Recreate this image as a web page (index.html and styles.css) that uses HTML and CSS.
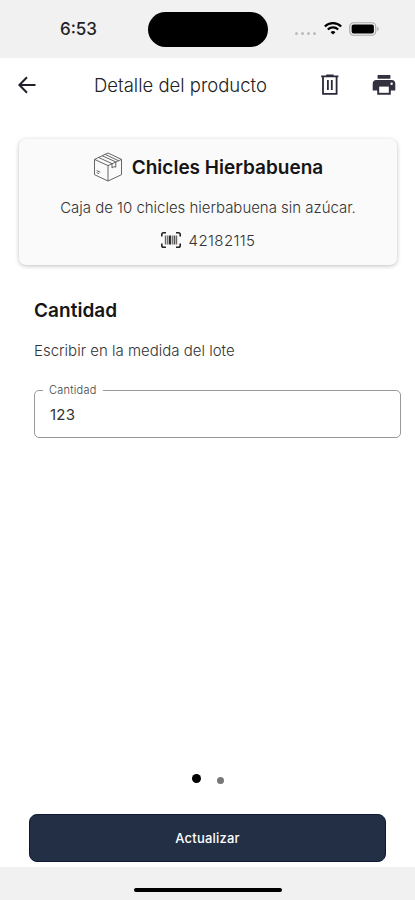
FILE: index.html
```html
<!DOCTYPE html>
<html lang="es">
<head>
<meta charset="utf-8">
<title>Detalle del producto</title>
<link rel="stylesheet" href="styles.css">
</head>
<body>
<div class="screen">
  <div class="status">
    <span class="time">6:53</span>
    <span class="island"></span>
    <span class="signal"><i></i><i></i><i></i><i></i></span>
    <svg class="wifi" width="18" height="13" viewBox="0 0 18 13" fill="none" stroke="#000" stroke-width="2.1"><path d="M.8 4.4a11.8 11.8 0 0 1 16.400 0M3.800 7.500a7.400 7.400 0 0 1 10.400 0"/><path d="M9 12.600 6.600 10.200a3.500 3.500 0 0 1 4.800 0z" fill="#000" stroke="none"/></svg>
    <svg class="battery" width="31" height="14" viewBox="0 0 31 14"><rect x=".75" y=".75" width="26" height="12.500" rx="3.800" fill="none" stroke="#aaa" stroke-width="1.200"/><rect x="2.600" y="2.600" width="22.300" height="8.800" rx="2" fill="#000"/><path d="M28.300 4.800v4.400c1.800-.6 1.800-3.800 0-4.400z" fill="#aaa"/></svg>
  </div>
  <header class="appbar">
    <svg class="back" width="18" height="18" viewBox="0 0 18 18" fill="none" stroke="#211f2b" stroke-width="2"><path d="M17.500 9H1.800M9 1.200 1.400 9 9 16.800"/></svg>
    <h1>Detalle del producto</h1>
    <svg class="trash" width="20" height="22" viewBox="0 0 20 22" fill="none" stroke="#2b283a" stroke-width="1.800"><path d="M1.200 2.400h17.200M6.200 1.400h7.400"/><path d="M3 3v16.800h13.600V3M7.900 6v10M11.800 6v10"/></svg>
    <svg class="printer" width="24" height="22" viewBox="0 0 24 22"><path fill="#33303f" d="M5.600 1h12.800v3.800H5.600zM4.200 6h15.600C22 6 23.300 7.700 23.300 9.800V16.500H18.800V20.700H5.200V16.500H.7V9.800C.7 7.700 2 6 4.200 6z"/><path fill="#fff" d="M7.200 12.600h9.600v6.200H7.200z"/><circle cx="19.600" cy="9.800" r="1.200" fill="#fff"/></svg>
  </header>
  <main>
    <section class="card">
      <div class="name">
        <svg width="30" height="30" viewBox="0 0 30 30" fill="none" stroke="#555" stroke-width=".9" stroke-linejoin="round"><path d="M15 1 28.500 7.400V22.700L15 29 1.500 22.700V7.400zM1.500 7.400 15 13.600 28.500 7.400M15 13.600V29M5.600 5.500 19 11.600M9.200 3.800 22.800 9.900M12.200 2.400 25.500 8.700M19 11.600V16L21 14.600 22.800 15.200V9.900M3.700 18.600 7.300 20.200M3.700 20.600 6 21.700"/></svg>
        <h2>Chicles Hierbabuena</h2>
      </div>
      <p class="desc">Caja de 10 chicles hierbabuena sin azúcar.</p>
      <div class="code">
        <svg width="20" height="16" viewBox="0 0 20 16" fill="none" stroke="#222"><path stroke-width="1.600" d="M5 .8H2.600Q.8.8.8 2.600V4.500M15 .8h2.400q1.800 0 1.800 1.800v1.900M5 15.200H2.600Q.8 15.200.8 13.400V11.500M15 15.200h2.400q1.800 0 1.800-1.800v-1.900"/><path stroke-width="1.200" stroke="#666" d="M4.400 3.500v9M6.300 3.500v9M11.300 3.500v9M15.600 3.500v9"/><path stroke-width="2.200" d="M8.800 3.500v9"/><path stroke-width="1.800" stroke="#555" d="M13.500 3.500v9"/></svg>
        <span>42182115</span>
      </div>
    </section>
    <section class="quantity">
      <h3>Cantidad</h3>
      <p>Escribir en la medida del lote</p>
      <fieldset>
        <legend>Cantidad</legend>
        <span>123</span>
      </fieldset>
    </section>
  </main>
  <div class="dots"><i class="on"></i><i></i></div>
  <button type="button">Actualizar</button>
  <footer><span></span></footer>
</div>
</body>
</html>
```
FILE: styles.css
```css
* { box-sizing: border-box; margin: 0; padding: 0; }
body { background: #fff; font-family: Inter, "Liberation Sans", sans-serif; color: #151515; }
svg { display: block; flex: none; }
.screen { width: 415px; height: 900px; display: flex; flex-direction: column; overflow: hidden; }
.status { height: 58px; flex: none; background: #f1f1f1; display: flex; align-items: center; }
.time { width: 88px; margin-left: 60px; font-size: 17px; font-weight: 500; line-height: 20px; color: #222; }
.island { width: 120px; height: 35px; border-radius: 18px; background: #000; }
.signal { display: flex; gap: 3px; margin: 9px 0 0 27px; }
.signal i { width: 3px; height: 3px; border-radius: 50%; background: #bbb; }
.wifi { margin-left: 8px; margin-top: -2px; }
.battery { margin-left: 7px; margin-top: -1px; }
.appbar { height: 54px; flex: none; display: flex; align-items: center; padding-left: 18px; }
.back { margin-right: 58px; margin-top: -1px; }
h1 { width: 226px; font-size: 18.5px; font-weight: 300; line-height: 24px; white-space: nowrap; color: #222; }
.trash, .printer { margin-top: -1px; }
.printer { margin-left: 32px; }
main { flex: 1; padding-top: 27px; }
.card { width: 378px; height: 126px; margin-left: 19px; border-radius: 7px; background: #fafafa; box-shadow: 0 1px 4px rgba(0,0,0,.25); padding-top: 12px; display: flex; flex-direction: column; align-items: center; }
.name { display: flex; align-items: center; gap: 9px; height: 32px; }
.name svg { margin-top: -1px; }
h2 { font-size: 19px; font-weight: 600; line-height: 24px; white-space: nowrap; margin-top: 2px; }
.desc { font-size: 15px; font-weight: 300; line-height: 20px; margin-top: 15px; color: #333; white-space: nowrap; letter-spacing: -.02px; }
.code { display: flex; align-items: center; gap: 8px; margin-top: 12px; height: 20px; font-size: 15px; font-weight: 300; letter-spacing: .4px; color: #333; }
.quantity { padding: 34px 14px 0 34px; }
h3 { font-size: 19px; font-weight: 600; line-height: 24px; letter-spacing: .05px; }
.quantity p { font-size: 15px; font-weight: 300; line-height: 20px; margin-top: 18px; color: #333; white-space: nowrap; }
fieldset { height: 55px; margin-top: 22px; border: 1px solid #999; border-radius: 5px; padding-left: 8px; }
legend { font-size: 11px; font-weight: 300; line-height: 14px; padding: 0 6px; color: #444; letter-spacing: .25px; }
fieldset span { display: block; margin: 8px 0 0 7px; font-size: 15px; line-height: 20px; color: #333; letter-spacing: .2px; }
.dots { height: 10px; flex: none; display: flex; align-items: center; justify-content: center; gap: 16px; margin-bottom: 31px; }
.dots i { width: 7px; height: 7px; border-radius: 50%; background: #777; margin-top: 5px; }
.dots .on { width: 9px; height: 9px; background: #000; margin-top: 0; }
button { flex: none; width: 357px; height: 48px; margin-left: 29px; margin-bottom: 5px; border: 1px solid #0e1736; border-radius: 8px; background: #232f45; color: #fff; font: 500 13px/20px Inter, "Liberation Sans", sans-serif; letter-spacing: .2px; }
footer { height: 33px; flex: none; background: #f1f1f1; padding: 21px 0 0 134px; }
footer span { display: block; width: 148px; height: 4px; border-radius: 2px; background: #000; }
```
